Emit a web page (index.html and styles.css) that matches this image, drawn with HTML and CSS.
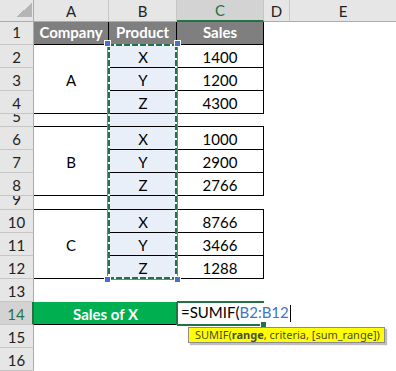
FILE: index.html
```html
<!DOCTYPE html>
<html>
<head>
  <meta charset="utf-8">
  <meta name="viewport" content="width=device-width">
  <title>SUMIF</title>
  <link rel="stylesheet" href="styles.css">
</head>
<body>
    <div class="sheet">
        <div class="corner"></div>
        <div class="ch">A</div>
        <div class="ch">B</div>
        <div class="ch sel">C</div>
        <div class="ch">D</div>
        <div class="ch last">E</div>

        <div class="rh top">1</div>
        <div class="c head">Company</div>
        <div class="c head">Product</div>
        <div class="c head">Sales</div>

        <div class="rh">2</div>
        <div class="c co">A</div>
        <div class="c pr">X</div>
        <div class="c num">1400</div>
        <div class="rh">3</div>
        <div class="c pr">Y</div>
        <div class="c num">1200</div>
        <div class="rh">4</div>
        <div class="c pr">Z</div>
        <div class="c num">4300</div>
        <div class="rh">5</div>
        <div class="c gap"></div>
        <div class="c gap pr"></div>
        <div class="c gap"></div>

        <div class="rh">6</div>
        <div class="c co">B</div>
        <div class="c pr">X</div>
        <div class="c num">1000</div>
        <div class="rh">7</div>
        <div class="c pr">Y</div>
        <div class="c num">2900</div>
        <div class="rh">8</div>
        <div class="c pr">Z</div>
        <div class="c num">2766</div>
        <div class="rh">9</div>
        <div class="c gap"></div>
        <div class="c gap pr"></div>
        <div class="c gap"></div>

        <div class="rh">10</div>
        <div class="c co">C</div>
        <div class="c pr">X</div>
        <div class="c num">8766</div>
        <div class="rh">11</div>
        <div class="c pr">Y</div>
        <div class="c num">3466</div>
        <div class="rh">12</div>
        <div class="c pr">Z</div>
        <div class="c num">1288</div>

        <div class="rh">13</div>
        <div class="rh sel">14</div>
        <div class="c total">Sales of X</div>
        <div class="edit">=SUMIF(<span class="ref">B2:B12</span><span class="caret"></span></div>
        <div class="rh">15</div>
        <div class="rh">16</div>
        <div class="rh"></div>

        <!-- formula reference B2:B12 -->
        <div class="range">
            <i class="knob tl"></i><i class="knob tr"></i>
            <i class="knob bl"></i><i class="knob br"></i>
        </div>
        <div class="tip">SUMIF(<b>range</b>, criteria, [sum_range])</div>
    </div>
</body>
</html>
```
FILE: styles.css
```css
body{
    margin: 0;
    background-color: #fff;
    overflow: hidden;
}

.sheet{
    position: relative;
    display: grid;
    grid-template-columns: 34px 75px 68px 87px 26px 1fr;
    grid-template-rows: 22px repeat(4, 23px) 13px repeat(3, 23px) 14px repeat(8, 23px);
    font-family: Lato, "Liberation Sans", sans-serif;
    font-size: 15px;
    line-height: 18px;
    color: #000;
}

.sheet > div{
    box-sizing: border-box;
    min-width: 0;
    white-space: nowrap;
}

.corner{
    background: #e6e6e6 linear-gradient(to bottom right, transparent 50%, #b5b5b5 50%) no-repeat right 1px bottom 4px / 16px 14px;
    border-right: 1px solid #ababab;
    border-bottom: 1px solid #ababab;
}

/* column headers */
.ch{
    background-color: #e6e6e6;
    border-right: 1px solid #c6c6c6;
    border-bottom: 1px solid #ababab;
    display: flex;
    align-items: center;
    justify-content: center;
    color: #222;
}

.ch.last{
    border-right: none;
}

.ch.sel{
    background-color: #d3d3d3;
    color: #217346;
    border-bottom: 2px solid #217346;
}

/* row headers */
.rh{
    grid-column: 1;
    background-color: #e6e6e6;
    border-right: 1px solid #ababab;
    border-bottom: 1px solid #c6c6c6;
    display: flex;
    align-items: flex-end;
    justify-content: center;
    overflow: hidden;
    padding-bottom: 1px;
    color: #222;
}

.rh.top{
    padding-bottom: 3px;
}

.rh.sel{
    background-color: #d3d3d3;
    color: #217346;
    border-right: 2px solid #217346;
}

/* cells */
.c{
    display: flex;
    align-items: flex-end;
    justify-content: center;
    padding-bottom: 1px;
}

.head{
    background-color: #7f7f7f;
    color: #fff;
    font-weight: 700;
    border-right: 1px solid #000;
    border-bottom: 1px solid #000;
    padding-bottom: 3px;
}

.co{
    grid-row: span 3;
    align-items: center;
    padding-top: 3px;
    border-right: 1px solid #000;
    border-bottom: 1px solid #000;
}

.pr{
    background-color: #e9eff8;
    border-bottom: 1px solid #000;
}

.num{
    border-right: 1px solid #000;
    border-bottom: 1px solid #000;
}

.gap{
    border-bottom: 1px solid #000;
}

.total{
    grid-column: span 2;
    background-color: #00b050;
    color: #fff;
    font-weight: 700;
    border-bottom: 1px solid #000;
}

/* cell in edit mode: the text runs on past its right edge */
.edit{
    position: relative;
    padding: 1px 0 0 4px;
    overflow: visible;
    box-shadow:
        0 -1px 0 #217346, inset 0 1px 0 #217346,
        -1px 0 0 #217346, inset 1px 0 0 #217346,
        0 1px 0 #217346, inset 0 -1px 0 #217346;
}

.edit::after{
    content: "";
    position: absolute;
    right: -3px;
    bottom: -3px;
    width: 5px;
    height: 5px;
    background-color: #217346;
    border: 1px solid #fff;
}

.ref{
    color: #4472c4;
}

.caret{
    display: inline-block;
    width: 1px;
    height: 17px;
    margin-left: 1px;
    vertical-align: -4px;
    background-color: #000;
}

/* marching ants round B2:B12 */
.range{
    position: absolute;
    left: 107px;
    top: 43px;
    width: 71px;
    height: 237px;
    box-sizing: border-box;
    border: 1px solid #5a85c8;
    background:
        repeating-linear-gradient(to bottom, #217346 0 6px, #fff 6px 8px) left top / 2px 100% no-repeat,
        repeating-linear-gradient(to bottom, #217346 0 6px, #fff 6px 8px) right top / 2px 100% no-repeat,
        repeating-linear-gradient(to right, #217346 0 6px, #fff 6px 8px) left top / 100% 2px no-repeat,
        repeating-linear-gradient(to right, #217346 0 6px, #fff 6px 8px) left bottom / 100% 2px no-repeat;
}

.knob{
    position: absolute;
    width: 5px;
    height: 5px;
    background-color: #4472c4;
    border: 1px solid #fff;
}

.knob.tl{ left: -4px; top: -4px; }
.knob.tr{ right: -4px; top: -4px; }
.knob.bl{ left: -4px; bottom: -4px; }
.knob.br{ right: -4px; bottom: -4px; }

.tip{
    position: absolute;
    left: 188px;
    top: 327px;
    width: 197px;
    height: 16px;
    box-sizing: border-box;
    padding-left: 6px;
    background-color: #ffff00;
    border: 1px solid #8c8c8c;
    box-shadow: 2px 2px 1px rgba(0, 0, 0, 0.25);
    font-family: "Noto Sans", "Liberation Sans", sans-serif;
    font-size: 11px;
    line-height: 14px;
    color: #4a4a3a;
}
```
